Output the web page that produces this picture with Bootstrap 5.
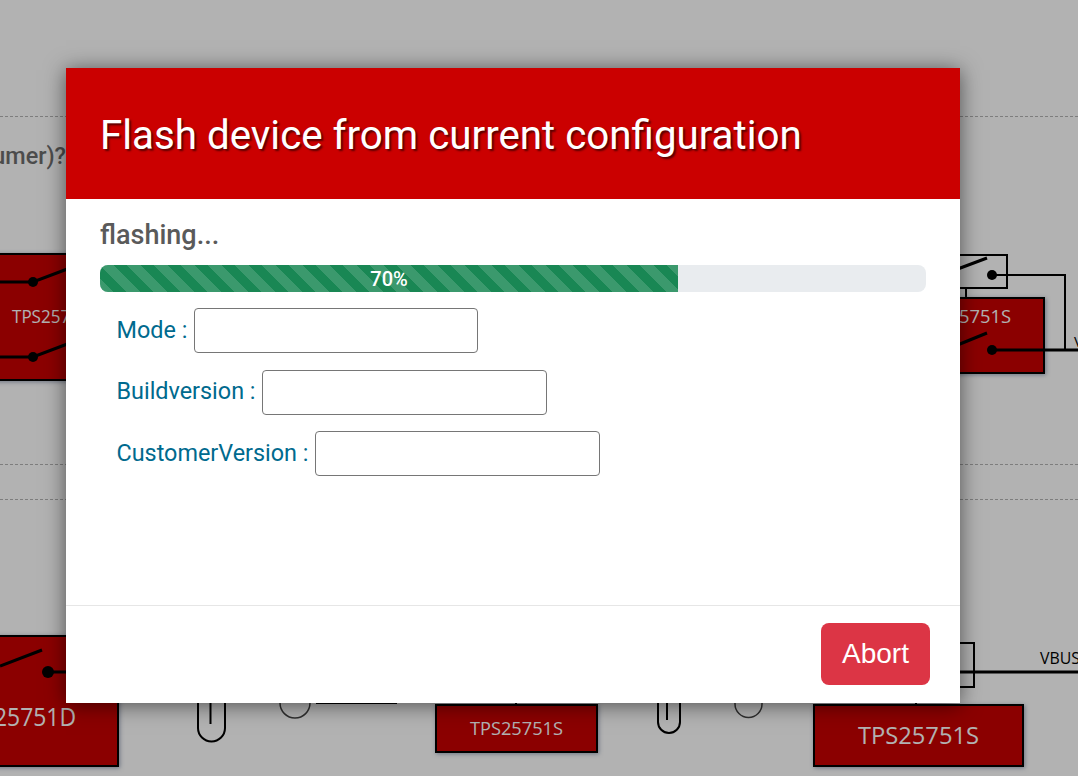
<!DOCTYPE html>
<html lang="en">
<head>
<meta charset="utf-8">
<title>Flash device</title>
<link href="https://cdn.jsdelivr.net/npm/bootstrap@5.3.0/dist/css/bootstrap.min.css" rel="stylesheet">
<style>
html, body { height: 100%; overflow: hidden; background: #fff; font-family: Roboto, sans-serif; }
.canvas-art { position: absolute; left: 0; top: 0; width: 1078px; height: 776px; }
.canvas-art text { font-family: "Open Sans", sans-serif; fill: #fff; }
.canvas-art .art-dark { fill: #000; }
.canvas-art .art-q { font-family: Roboto, sans-serif; font-weight: 500; font-size: 23.4px; fill: #6e6e6e; }
.canvas-art .art-red { fill: #c80000; stroke: #000; stroke-width: 2; filter: drop-shadow(1px 1px 2px rgba(60,80,120,.5)); }
.canvas-art .art-none { fill: none; stroke: #000; stroke-width: 2; }
.canvas-art .art-grey { fill: none; stroke: #444; stroke-width: 1.5; }
.canvas-art .art-thin { fill: none; stroke: #000; stroke-width: 3; }
.canvas-art .art-dash { stroke: #b4b4b4; stroke-width: 1; stroke-dasharray: 3 2; }
.art-veil { position: absolute; inset: 0; background: rgba(0,0,0,.3); }
.flash-dialog { position: absolute; left: 66px; top: 68px; width: 894px; height: 635px; border: 0; border-radius: 0; background: #fff; box-shadow: 0 2px 20px rgba(0,0,0,.55); }
.flash-head { height: 131px; padding: 0 34px; background: #cb0000; border: 0; border-radius: 0; }
.flash-title { font-family: Roboto, sans-serif; font-size: 40.3px; font-weight: 400; color: #fff; line-height: 1; text-shadow: 2px 2px 2px #5a0000; margin: 5px 0 0; }
.flash-body { padding: 20px 34px 0; flex: 1 1 auto; }
.flash-status { font-size: 27px; font-weight: 500; color: #5a5a5a; line-height: 32px; margin: 0 0 14px; }
.flash-progress { --bs-progress-height: 27px; height: 27px; border-radius: 8px; font-size: 20px; margin-bottom: 16px; }
.flash-progress .progress-bar { width: 70%; font-weight: 500; }
.flash-row { padding-left: 16.5px; height: 45px; margin-bottom: 16.5px; gap: 6.5px; }
.flash-row label { font-size: 23.4px; line-height: 1.5; color: #006a8e; margin: 0; white-space: nowrap; }
.flash-row input { width: 284px; height: 45px; border: 1px solid #767676; border-radius: 4px; background: #fff; padding: 0 6px; }
.flash-row .field-wide { width: 285px; }
.flash-foot { height: 98px; padding: 0 30px 2px 0; border-top: 1px solid #e6e6e6; border-radius: 0; }
.flash-abort { width: 109px; height: 62px; padding: 0; margin: 0; font-family: "Liberation Sans", sans-serif; font-size: 28px; border-radius: 8px; background: #dc3545; border: 0; }
</style>
</head>
<body>
<svg class="canvas-art" viewBox="0 0 1078 776" xmlns="http://www.w3.org/2000/svg">
  <line class="art-dash" x1="0" y1="116.5" x2="1078" y2="116.5"/>
  <line class="art-dash" x1="0" y1="464.5" x2="1078" y2="464.5"/>
  <line class="art-dash" x1="0" y1="499.5" x2="1078" y2="499.5"/>
  <text class="art-q" x="66" y="164" text-anchor="end">umer)?</text>

  <rect class="art-red" x="-5" y="254" width="100" height="126"/>
  <text x="12" y="323" font-size="18" textLength="90" lengthAdjust="spacingAndGlyphs">TPS25751D</text>
  <path class="art-thin" d="M0 282H33L70 268M0 357H33L70 343"/>
  <circle cx="33" cy="282" r="5"/><circle cx="33" cy="357" r="5"/>

  <rect class="art-none" x="930" y="255" width="77" height="33"/>
  <line class="art-none" x1="966" y1="288" x2="966" y2="298"/>
  <rect class="art-red" x="930" y="298" width="114" height="75"/>
  <text x="1011" y="323" font-size="18" text-anchor="end" textLength="52" lengthAdjust="spacingAndGlyphs">5751S</text>
  <path class="art-thin" d="M955 270L987 258M955 346L987 333"/>
  <path class="art-none" d="M992 275H1065V350"/>
  <path class="art-thin" d="M992 350H1078"/>
  <circle cx="992" cy="275" r="5"/><circle cx="992" cy="350" r="5"/>
  <text class="art-dark" x="1074" y="347" font-size="15">V</text>

  <rect class="art-red" x="-20" y="636" width="138" height="130"/>
  <path class="art-thin" d="M0 666L42 650"/>
  <path class="art-thin" d="M48 672H70"/>
  <circle cx="48" cy="672" r="6"/>
  <text x="76" y="726" font-size="25" text-anchor="end" textLength="82" lengthAdjust="spacingAndGlyphs">25751D</text>

  <path class="art-none" d="M198 690V728a13.500 13.500 0 0 0 27 0V690"/>
  <line class="art-none" x1="210.500" y1="695" x2="210.500" y2="724"/>
  <path class="art-grey" d="M280 690V703a15 15 0 0 0 30 0V690"/>
  <line class="art-none" x1="316" y1="703" x2="397" y2="703"/>

  <line class="art-none" x1="516" y1="695" x2="516" y2="705"/>
  <rect class="art-red" x="436" y="705" width="161" height="47"/>
  <text x="516.500" y="735" font-size="18" text-anchor="middle" textLength="93" lengthAdjust="spacingAndGlyphs">TPS25751S</text>

  <path class="art-none" d="M658 690V722a11 11 0 0 0 22 0V690"/>
  <line class="art-none" x1="667" y1="695" x2="667" y2="720"/>
  <path class="art-grey" d="M735 690V704a13.500 13.500 0 0 0 27 0V690"/>

  <line class="art-none" x1="916" y1="695" x2="916" y2="705"/>
  <rect class="art-red" x="814" y="705" width="209" height="61"/>
  <text x="918.500" y="744" font-size="24" text-anchor="middle" textLength="121" lengthAdjust="spacingAndGlyphs">TPS25751S</text>

  <rect class="art-none" x="930" y="643" width="44" height="44"/>
  <path class="art-thin" d="M930 672H1078"/>
  <text class="art-dark" x="1040" y="664" font-size="16" textLength="40" lengthAdjust="spacingAndGlyphs">VBUS</text>
</svg>
<div class="art-veil"></div>

<div class="modal-content flash-dialog">
  <div class="modal-header flash-head">
    <h1 class="modal-title flash-title">Flash device from current configuration</h1>
  </div>
  <div class="modal-body flash-body">
    <p class="flash-status">flashing...</p>
    <div class="progress flash-progress" role="progressbar" aria-valuenow="70" aria-valuemin="0" aria-valuemax="100">
      <div class="progress-bar progress-bar-striped bg-success">70%</div>
    </div>
    <div class="d-flex align-items-center flash-row">
      <label for="f-mode">Mode :</label>
      <input id="f-mode" type="text">
    </div>
    <div class="d-flex align-items-center flash-row">
      <label for="f-build">Buildversion :</label>
      <input id="f-build" class="field-wide" type="text">
    </div>
    <div class="d-flex align-items-center flash-row">
      <label for="f-cust">CustomerVersion :</label>
      <input id="f-cust" class="field-wide" type="text">
    </div>
  </div>
  <div class="modal-footer flash-foot">
    <button type="button" class="btn btn-danger flash-abort">Abort</button>
  </div>
</div>
<script src="https://cdn.jsdelivr.net/npm/bootstrap@5.3.0/dist/js/bootstrap.bundle.min.js"></script>
</body>
</html>
